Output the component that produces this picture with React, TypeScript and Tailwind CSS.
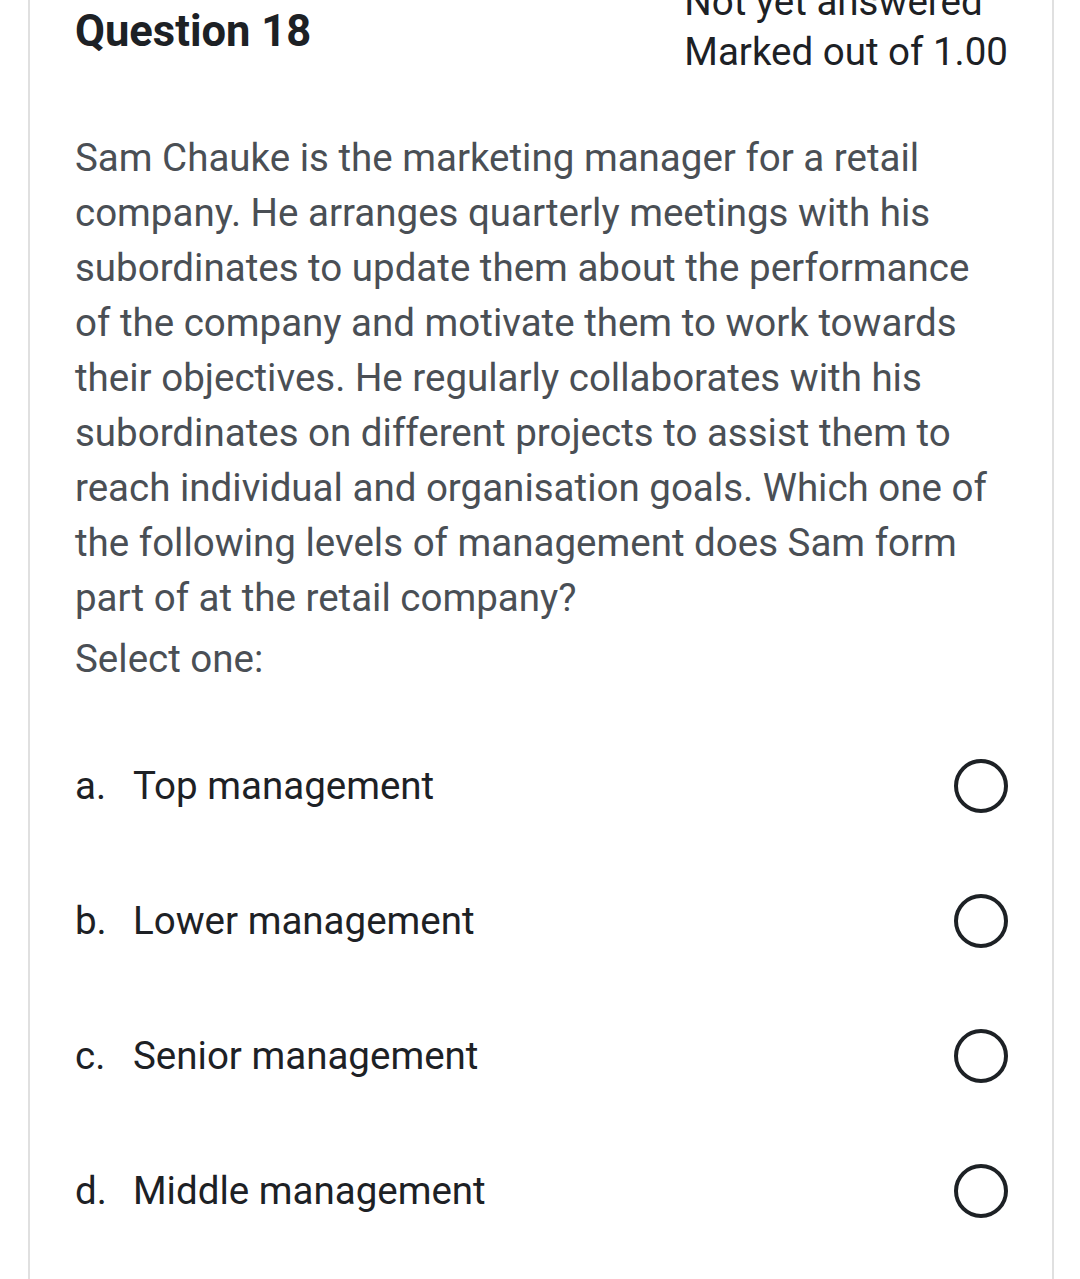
import React from "react";

const options = [
  { letter: "a.", text: "Top management" },
  { letter: "b.", text: "Lower management" },
  { letter: "c.", text: "Senior management" },
  { letter: "d.", text: "Middle management" },
];

export default function App() {
  return (
    <div className="h-[1279px] w-[1080px] overflow-hidden bg-white font-['Roboto',sans-serif]">
      <div className="ml-[28px] min-h-[1279px] w-[1026px] border-x-2 border-[#e0e0e0] pl-[45px] pr-[44px]">
        {/* Header */}
        <div className="flex items-start justify-between">
          <h3 className="pt-[6px] text-[43.5px] font-bold leading-[52px] text-[#1d2125]">Question 18</h3>
          <div className="-mt-[23px] text-[38.5px] leading-[50px] text-[#1d2125]">
            <div>Not yet answered</div>
            <div>Marked out of 1.00</div>
          </div>
        </div>

        {/* Question text */}
        <div className="mt-[53px] text-[38.5px] leading-[55px] text-[#4a4f55]">
          <p>
            Sam Chauke is the marketing manager for a retail company. He arranges quarterly meetings with his
            subordinates to update them about the performance of the company and motivate them to work towards
            their objectives. He regularly collaborates with his subordinates on different projects to assist them
            to reach individual and organisation goals. Which one of the following levels of management does Sam
            form part of at the retail company?
          </p>
          <p className="mt-[6px]">Select one:</p>
        </div>

        {/* Options */}
        <div className="mt-[32px] flex flex-col">
          {options.map((o) => (
            <label key={o.letter} className="flex h-[135px] items-center text-[38.5px] text-[#1d2125]">
              <span className="w-[58px]">{o.letter}</span>
              <span className="flex-1">{o.text}</span>
              <span className="h-[54px] w-[54px] rounded-full border-[4px] border-[#1d2125]" />
            </label>
          ))}
        </div>
      </div>
    </div>
  );
}
